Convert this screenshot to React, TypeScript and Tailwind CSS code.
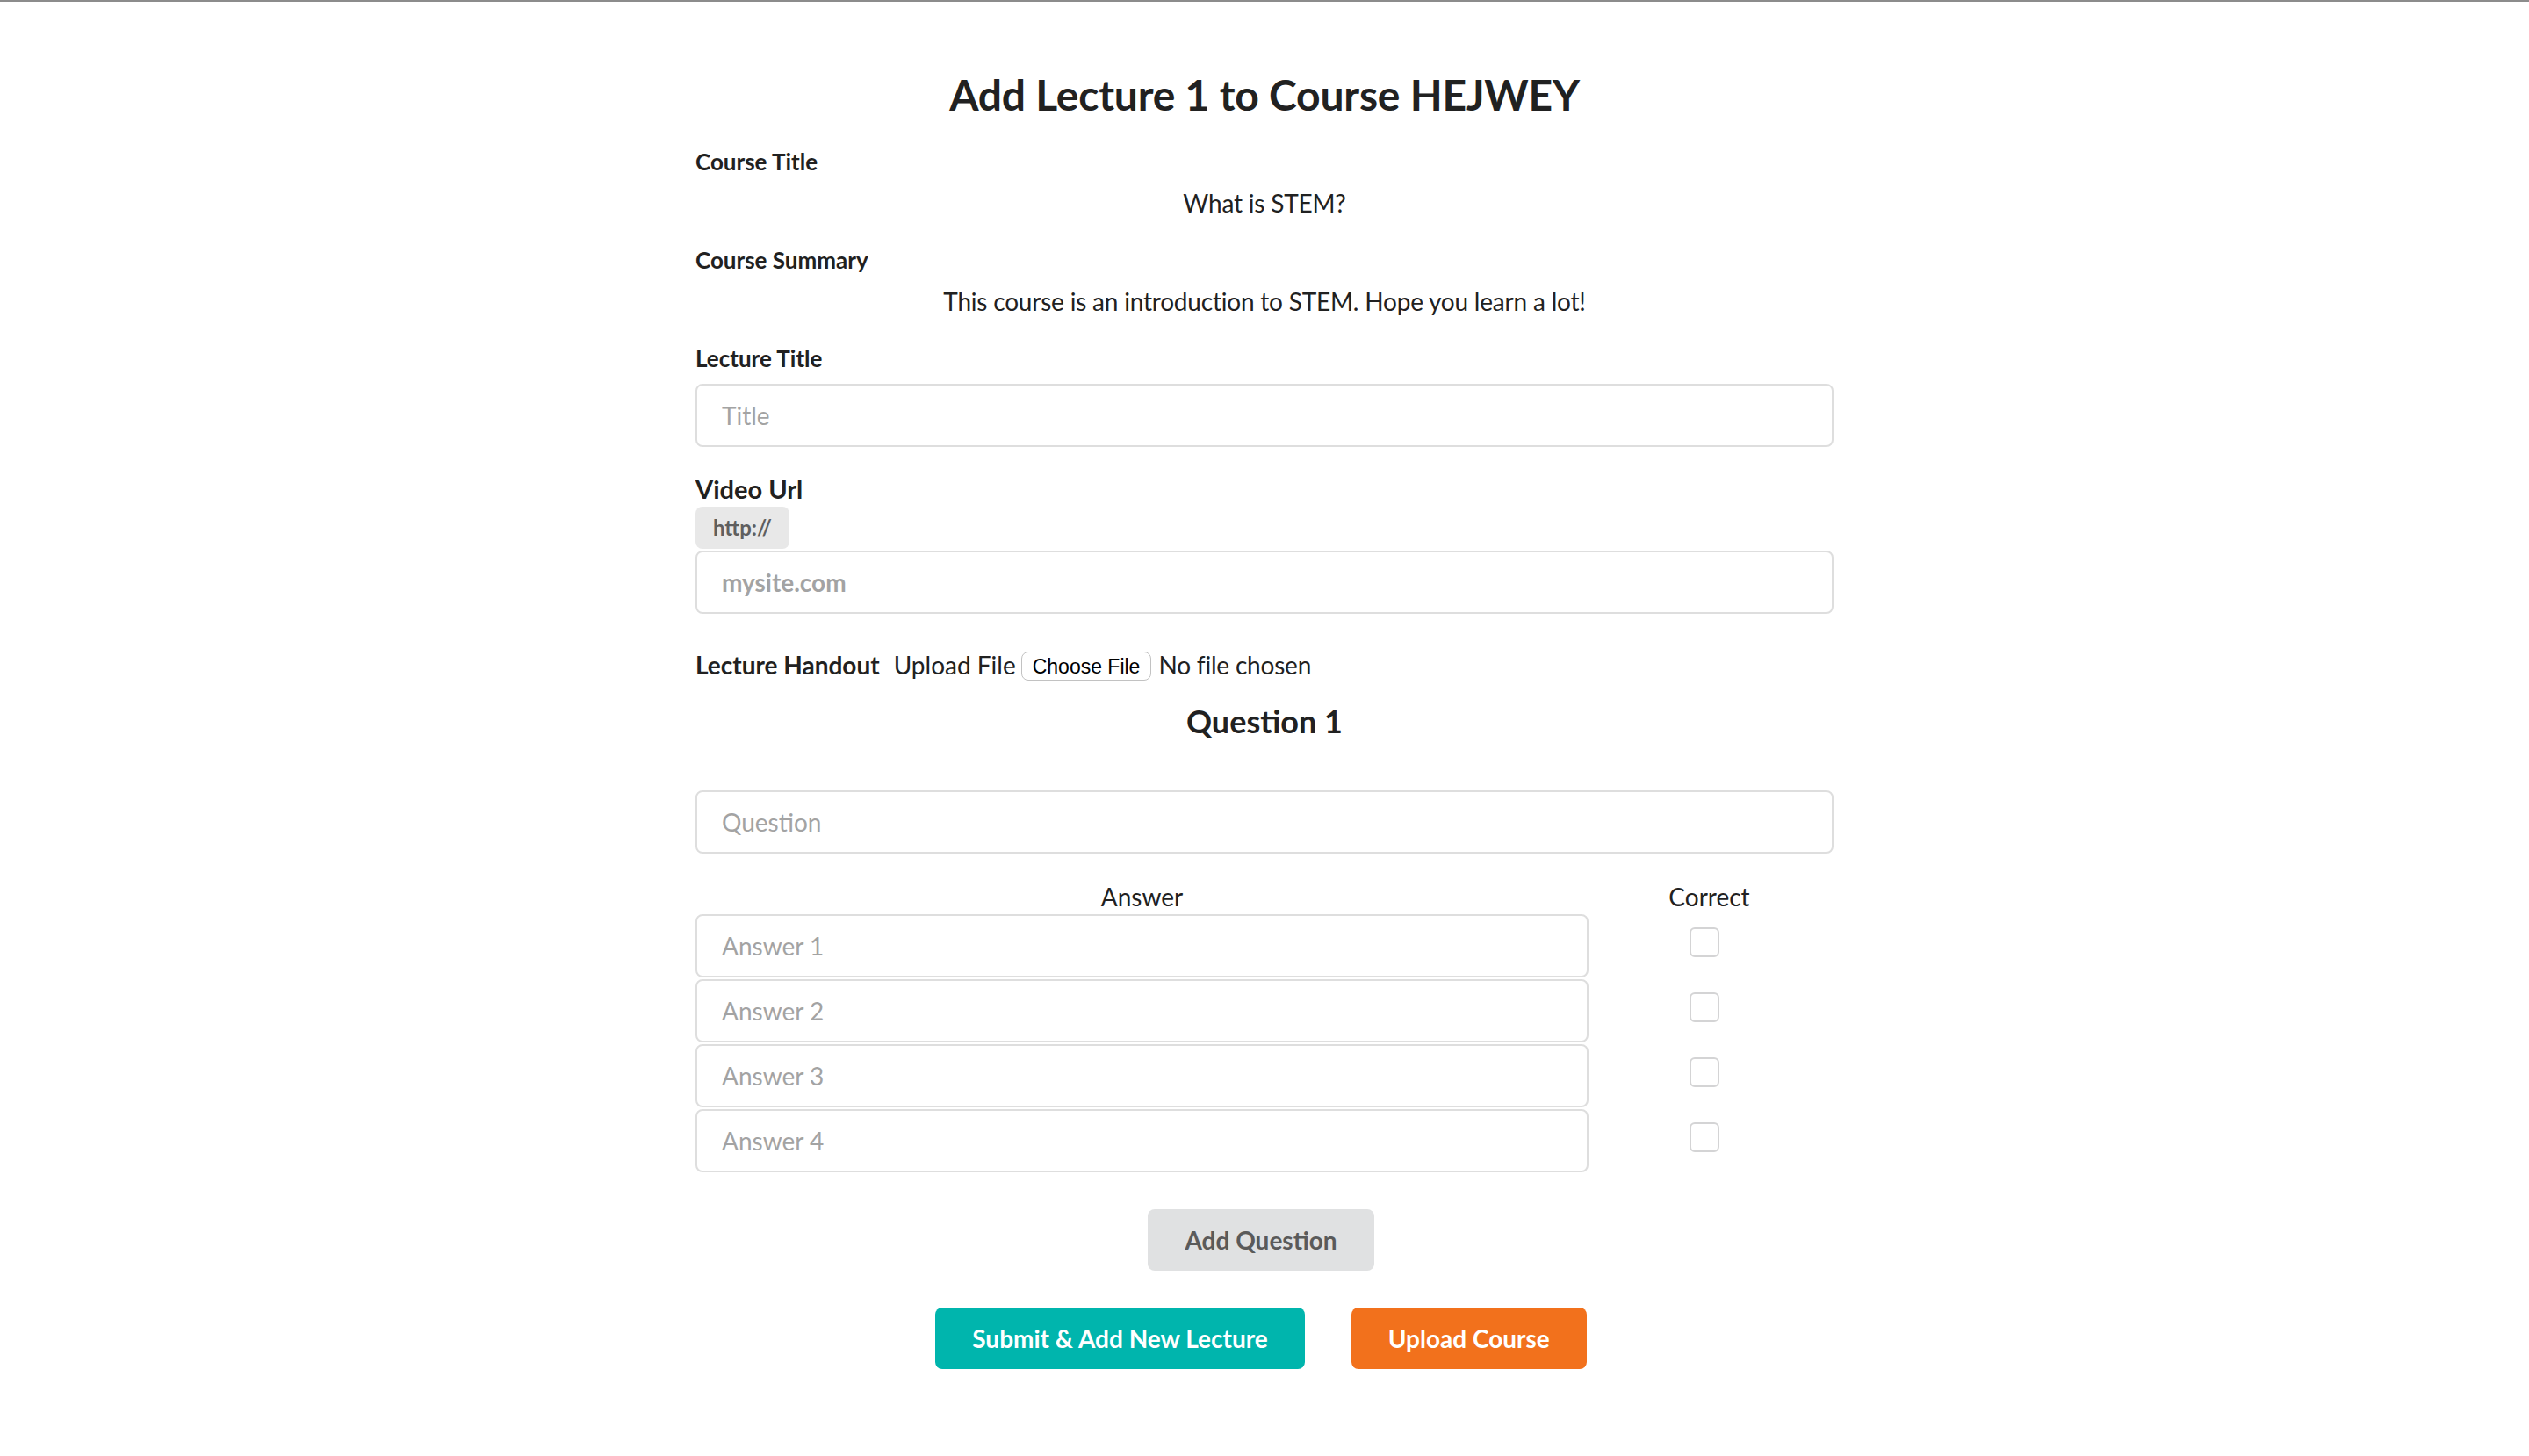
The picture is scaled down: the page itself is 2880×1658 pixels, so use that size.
import React from 'react';

const inputCls =
  "h-[72px] w-full rounded-[8px] border-2 border-[#dedede] bg-white px-[28px] text-[28px] text-[#212121] outline-none placeholder:text-[#a3a3a3]";

function FieldLabel({ children }: { children: React.ReactNode }) {
  return <div className="text-[26px] font-bold leading-[32px]">{children}</div>;
}

function Checkbox() {
  return (
    <div className="flex h-[72px] items-start justify-center pt-[15px] pr-[16px]">
      <input
        type="checkbox"
        className="h-[34px] w-[34px] appearance-none rounded-[6px] border-2 border-[#d4d4d5] bg-white"
      />
    </div>
  );
}

export default function App() {
  const answers = ['Answer 1', 'Answer 2', 'Answer 3', 'Answer 4'];

  return (
    <div className="min-h-screen bg-white font-['Lato',sans-serif] text-[#212121]">
      <div className="h-[2px] bg-[#8c8c8c]" />
      <div className="mx-auto w-[1296px] pt-[78px] pb-[90px]">
        <h2 className="text-center text-[48px] font-bold leading-[56px] tracking-[-0.2px]">
          Add Lecture 1 to Course HEJWEY
        </h2>

        <div className="mt-[32px]">
          <FieldLabel>Course Title</FieldLabel>
          <p className="mt-[15px] text-center text-[28px] leading-[32px] tracking-[-0.2px]">What is STEM?</p>
        </div>

        <div className="mt-[33px]">
          <FieldLabel>Course Summary</FieldLabel>
          <p className="mt-[15px] text-center text-[28px] leading-[32px] tracking-[-0.2px]">
            This course is an introduction to STEM. Hope you learn a lot!
          </p>
        </div>

        <div className="mt-[33px]">
          <FieldLabel>Lecture Title</FieldLabel>
          <input className={`mt-[13px] ${inputCls}`} placeholder="Title" />
        </div>

        <div className="mt-[30px]">
          <div className="text-[29px] font-bold leading-[36px]">Video Url</div>
          <div className="mt-[2px] inline-flex h-[48px] items-center rounded-[8px] bg-[#e8e8e8] px-[20px] text-[24px] font-bold text-[#5f5f5f]">
            http://
          </div>
          <input
            className={`mt-[2px] ${inputCls} font-bold placeholder:text-[#9d9d9d]`}
            placeholder="mysite.com"
          />
        </div>

        <div className="mt-[40px] flex h-[36px] items-center text-[28px]">
          <span className="font-bold">Lecture Handout</span>
          <span className="ml-[16px]">Upload File</span>
          <span className="ml-[6px] mt-[3px] flex h-[33px] items-center rounded-[8px] border border-[#c2c2c2] bg-white px-[12px] pt-[2px] font-['Liberation_Sans',Arial,sans-serif] text-[23px] text-black">
            Choose File
          </span>
          <span className="ml-[8px] tracking-[-0.2px]">No file chosen</span>
        </div>

        <h3 className="mt-[24px] text-center text-[36px] font-bold leading-[44px]">Question 1</h3>

        <input className={`mt-[57px] ${inputCls}`} placeholder="Question" />

        <div className="mt-[33px] grid grid-cols-[1017px_1fr]">
          <div className="text-center text-[28px] leading-[32px]">Answer</div>
          <div className="pr-[4px] text-center text-[28px] leading-[32px]">Correct</div>
        </div>

        <div className="mt-[4px] grid grid-cols-[1017px_1fr] gap-y-[2px]">
          {answers.map((a) => (
            <React.Fragment key={a}>
              <input className={inputCls} placeholder={a} />
              <Checkbox />
            </React.Fragment>
          ))}
        </div>

        <div className="mt-[42px] flex justify-center pr-[8px]">
          <button className="h-[70px] rounded-[8px] bg-[#e0e1e2] px-[42px] text-[28px] font-bold text-[#5a5a5a]">
            Add Question
          </button>
        </div>

        <div className="mt-[42px] flex justify-center gap-[53px] pr-[8px]">
          <button className="h-[70px] rounded-[8px] bg-[#00b5ad] px-[42px] text-[28px] font-bold text-white">
            Submit &amp; Add New Lecture
          </button>
          <button className="h-[70px] rounded-[8px] bg-[#f2711c] px-[42px] text-[28px] font-bold text-white">
            Upload Course
          </button>
        </div>
      </div>
    </div>
  );
}
